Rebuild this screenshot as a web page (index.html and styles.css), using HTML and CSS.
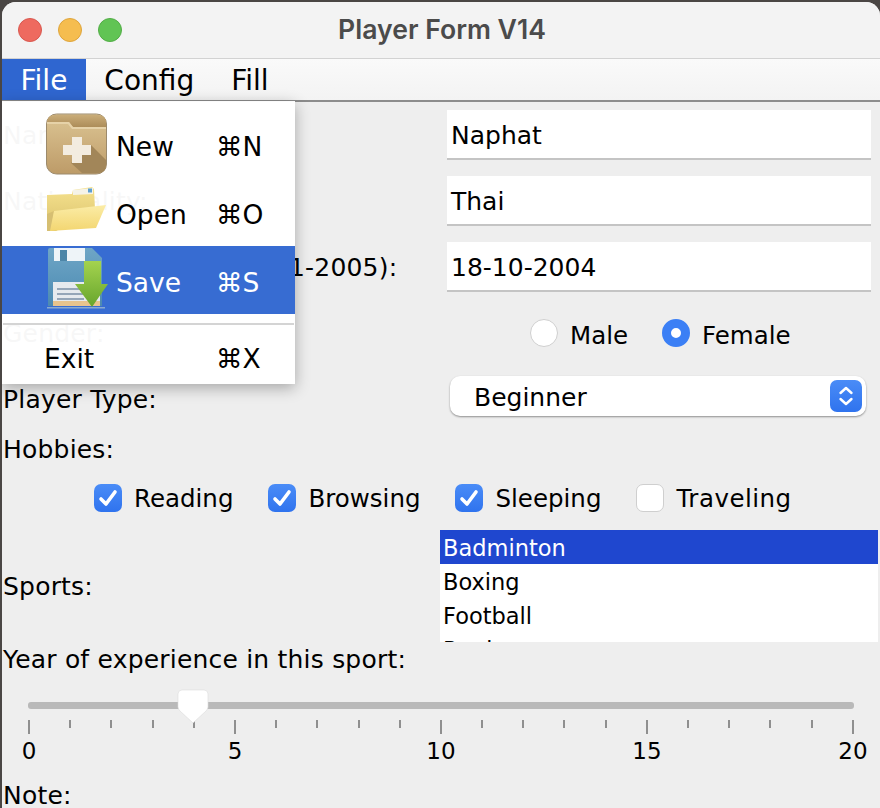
FILE: index.html
```html
<!DOCTYPE html>
<html lang="en">
<head>
  <meta charset="UTF-8" />
  <title>Player Form V14</title>
  <link rel="stylesheet" href="styles.css">
</head>
<body>

  <div class="window">
    <div class="titlebar">
      <div class="lights">
        <span class="light red"></span>
        <span class="light yellow"></span>
        <span class="light green"></span>
      </div>
      <div class="title">Player Form V14</div>
    </div>

    <div class="menubar">
      <span class="menu-item active">File</span>
      <span class="menu-item">Config</span>
      <span class="menu-item">Fill</span>
    </div>

    <div class="form">
      <div class="row row-input">
        <label>Name:</label>
        <div class="text-field">Naphat</div>
      </div>
      <div class="row row-input">
        <label>Nationality:</label>
        <div class="text-field">Thai</div>
      </div>
      <div class="row row-input">
        <label>Date of Birth (eg. 31-01-2005):</label>
        <div class="text-field">18-10-2004</div>
      </div>

      <div class="row row-gender">
        <label>Gender:</label>
        <div class="radios">
          <span class="radio"></span><span class="radio-text male">Male</span>
          <span class="radio on"></span><span class="radio-text">Female</span>
        </div>
      </div>

      <div class="row row-type">
        <label>Player Type:</label>
        <div class="combo">
          <span class="combo-text">Beginner</span>
          <span class="combo-btn">
            <svg width="18" height="26" viewBox="0 0 18 26"><path d="M3.5 10 L9 5 L14.5 10 M3.5 16 L9 21 L14.5 16" fill="none" stroke="#fff" stroke-width="2.4" stroke-linecap="round" stroke-linejoin="round"/></svg>
          </span>
        </div>
      </div>

      <div class="row-hobbies">Hobbies:</div>

      <div class="checks">
        <span class="check on"><svg width="28" height="28" viewBox="0 0 28 28"><path d="M7 15 L12 20 L21 8" fill="none" stroke="#fff" stroke-width="3.6" stroke-linecap="round" stroke-linejoin="round"/></svg></span>
        <span class="check-text">Reading</span>
        <span class="check on"><svg width="28" height="28" viewBox="0 0 28 28"><path d="M7 15 L12 20 L21 8" fill="none" stroke="#fff" stroke-width="3.6" stroke-linecap="round" stroke-linejoin="round"/></svg></span>
        <span class="check-text">Browsing</span>
        <span class="check on"><svg width="28" height="28" viewBox="0 0 28 28"><path d="M7 15 L12 20 L21 8" fill="none" stroke="#fff" stroke-width="3.6" stroke-linecap="round" stroke-linejoin="round"/></svg></span>
        <span class="check-text">Sleeping</span>
        <span class="check"></span>
        <span class="check-text wide">Traveling</span>
      </div>

      <div class="row row-sports">
        <label>Sports:</label>
        <div class="list">
          <div class="list-item selected">Badminton</div>
          <div class="list-item">Boxing</div>
          <div class="list-item">Football</div>
          <div class="list-item">Rugby</div>
        </div>
      </div>

      <div class="row-year">Year of experience in this sport:</div>

      <div class="slider">
        <div class="track">
          <svg class="thumb" width="32" height="35" viewBox="0 0 32 35"><path d="M5 1 H27 Q31 1 31 5 V18 Q31 20 29 22 L16 34 L3 22 Q1 20 1 18 V5 Q1 1 5 1 Z" fill="#fff" stroke="#dcdcdc" stroke-width="0.6"/></svg>
        </div>
        <div class="ticks">
          <i class="major"></i><i></i><i></i><i></i><i></i>
          <i class="major"></i><i></i><i></i><i></i><i></i>
          <i class="major"></i><i></i><i></i><i></i><i></i>
          <i class="major"></i><i></i><i></i><i></i><i></i>
          <i class="major"></i>
        </div>
        <div class="tick-labels">
          <span>0</span><span>5</span><span>10</span><span>15</span><span>20</span>
        </div>
      </div>

      <div class="row-note">Note:</div>
    </div>

    <!-- open File menu, sits over the form -->
    <div class="popup">
      <div class="popup-row">
        <svg class="popup-icon" width="62" height="66" viewBox="0 -2 62 66">
          <defs>
            <linearGradient id="box" x1="0" y1="0" x2="0" y2="1"><stop offset="0" stop-color="#dcc594"/><stop offset="1" stop-color="#bd9b68"/></linearGradient>
            <linearGradient id="fold" x1="0" y1="0" x2="0" y2="1"><stop offset="0" stop-color="#c9ac78"/><stop offset="1" stop-color="#ad8d59"/></linearGradient>
            <linearGradient id="front" x1="0" y1="0" x2="0" y2="1"><stop offset="0" stop-color="#fbeca6"/><stop offset="1" stop-color="#f3d671"/></linearGradient>
            <linearGradient id="back" x1="0" y1="0" x2="0" y2="1"><stop offset="0" stop-color="#f6e28e"/><stop offset="1" stop-color="#d9c16c"/></linearGradient>
            <linearGradient id="disk" x1="0" y1="0" x2="0" y2="1"><stop offset="0" stop-color="#6fa6c6"/><stop offset="1" stop-color="#4c8ab2"/></linearGradient>
            <linearGradient id="arrow" x1="0" y1="0" x2="0" y2="1"><stop offset="0" stop-color="#a4d34f"/><stop offset="1" stop-color="#67a52c"/></linearGradient>
          </defs>
          <rect x="0.5" y="1" width="60" height="60" rx="10" fill="url(#box)" stroke="#9c8a6c" stroke-width="1"/>
          <path d="M1 10 Q1 2 9 2 H52 Q60 2 60 10 V14 H27 L23 9 H1 Z" fill="url(#fold)"/>
          <path d="M1 9 H23 L27 14 H60 V16 H26 L22 11 H1 Z" fill="#e6d2a8"/>
          <path d="M45 32 L60 47 V52 Q60 60 52 60 H36 L25 50 Z" fill="#a28659"/>
          <path d="M26 24 H36 V32 H45 V42 H36 V50 H26 V42 H17 V32 H26 Z" fill="#f3ece0"/>
        </svg>
        <span class="popup-label">New</span>
        <span class="popup-key">⌘N</span>
      </div>
      <div class="popup-row">
        <svg class="popup-icon" width="62" height="66" viewBox="0 -2 62 66">
          <path d="M1 14 L26 13 L27 9 L46 6 L48 8 L49 28 L10 50 L1 50 Z" fill="url(#back)"/>
          <path d="M27 9 L47 7 L47 13 L27 14 Z" fill="#f5f3e8"/>
          <rect x="42" y="7.5" width="4" height="4" fill="#5e9fd0"/>
          <path d="M1 33 L8 30 L5 50 L1 50 Z" fill="#d6bf72"/>
          <path d="M8 30 L60 24 L50 47 L4 50 Z" fill="url(#front)"/>
        </svg>
        <span class="popup-label">Open</span>
        <span class="popup-key">⌘O</span>
      </div>
      <div class="popup-row selected">
        <svg class="popup-icon" width="62" height="66" viewBox="0 -2 62 66">
          <path d="M2 1 Q2 -1 4 -1 H46 L56 9 V57 H2 Z" fill="url(#disk)"/>
          <rect x="8" y="-1" width="31" height="13" fill="#eef4f8"/>
          <rect x="14" y="1" width="7" height="11" fill="#4d86a8"/>
          <rect x="7" y="33" width="47" height="24" fill="#e6eaee"/>
          <path d="M11 40 H38 M11 45 H38 M11 50 H38" stroke="#95a6b8" stroke-width="2"/>
          <rect x="7" y="52" width="47" height="5" fill="#e8c48d"/>
          <rect x="1" y="58" width="58" height="1.5" fill="#8aaad0"/>
          <path d="M38 12 H55 V35 H62 L46 58 L29 35 H38 Z" fill="url(#arrow)"/>
        </svg>
        <span class="popup-label">Save</span>
        <span class="popup-key">⌘S</span>
      </div>
      <div class="popup-sep"></div>
      <div class="popup-row exit">
        <span class="popup-label">Exit</span>
        <span class="popup-key">⌘X</span>
      </div>
    </div>
  </div>

</body>
</html>
```

FILE: styles.css
```css
* {
  box-sizing: border-box;
  margin: 0;
  padding: 0;
}

html, body {
  height: 100%;
  overflow: hidden;
}

body {
  font-family: "DejaVu Sans", sans-serif;
  font-size: 25px;
  letter-spacing: 0.2px;
  background-color: #4a4644;
  color: #000;
}

.window {
  position: relative;
  margin: 2px 0 0 2px;
  height: 806px;
  background-color: #eeeeee;
  border-top-left-radius: 14px;
  border-top-right-radius: 14px;
  overflow: hidden;
}

/* title bar */
.titlebar {
  position: relative;
  height: 57px;
  background-color: #f3f3f3;
  border-bottom: 1px solid #d2d2d2;
  display: flex;
  align-items: center;
  justify-content: center;
}

.lights {
  position: absolute;
  left: 16px;
  top: 16px;
  display: flex;
  gap: 16px;
}

.light {
  width: 24px;
  height: 24px;
  border-radius: 50%;
}

.red { background-color: #ee6a5f; border: 1px solid #d9584f; }
.yellow { background-color: #f5bd4f; border: 1px solid #dfa53c; }
.green { background-color: #61c454; border: 1px solid #52ad46; }

.title {
  font-family: Inter, sans-serif;
  font-size: 26.6px;
  font-weight: 600;
  letter-spacing: 0;
  color: #4b4b4b;
  padding: 0 0 2px 2px;
}

/* menu bar */
.menubar {
  height: 43px;
  display: flex;
  background: linear-gradient(#fafafa, #f3f3f3);
  border-bottom: 2px solid #8c8c8c;
}

.menu-item {
  padding: 3px 18.5px 0;
  line-height: 38px;
  font-size: 28px;
  letter-spacing: 0;
}

.menu-item.active {
  background-color: #2f66d0;
  color: #fff;
}

/* form */
.form {
  padding-top: 8px;
}

.row {
  display: flex;
}

.row label {
  width: 445px;
  flex: none;
  padding-left: 1px;
}

.row-input {
  height: 50px;
  margin-bottom: 16px;
  align-items: center;
}

.text-field {
  width: 424px;
  height: 50px;
  background-color: #fff;
  border-bottom: 2px solid #c4c4c4;
  padding-left: 4px;
  line-height: 52px;
  letter-spacing: 0;
}

.row-gender {
  height: 50px;
  align-items: center;
}

.radios {
  display: flex;
  align-items: center;
  margin-left: 83px;
}

.radio {
  width: 28px;
  height: 28px;
  border-radius: 50%;
  background-color: #fff;
  border: 1px solid #cfcfcf;
  margin-right: 12px;
}

.radio.on {
  border: 9px solid #3b7ff5;
}

.radio-text {
  font-size: 24.5px;
  letter-spacing: 0;
  padding-top: 4px;
}

.radio-text.male {
  margin-right: 34px;
}

.row-type {
  height: 42px;
  margin-top: 16px;
  align-items: flex-end;
}

.row-type label {
  line-height: 38px;
  margin-bottom: -3px;
}

.combo {
  margin-left: 3px;
  width: 416px;
  height: 40px;
  background-color: #fff;
  border-radius: 10px;
  box-shadow: 0 1px 2px rgba(0, 0, 0, 0.4);
  display: flex;
  align-items: center;
  justify-content: space-between;
  padding: 0 4px 0 24px;
}

.combo-text {
  padding-top: 2px;
  letter-spacing: 0;
}

.combo-btn {
  width: 32px;
  height: 32px;
  border-radius: 7px;
  background: linear-gradient(#4a8cf7, #2f73ee);
  display: flex;
  align-items: center;
  justify-content: center;
}

.row-hobbies {
  padding-left: 1px;
  margin-top: 16px;
  line-height: 36px;
}

.checks {
  display: flex;
  align-items: center;
  height: 36px;
  margin-top: 12px;
  padding-left: 92px;
}

.check {
  width: 28px;
  height: 28px;
  border-radius: 7px;
  background-color: #fff;
  border: 1px solid #cfcfcf;
  margin-right: 12px;
  flex: none;
}

.check.on {
  border: 0;
  background: linear-gradient(#4a8cf7, #2f73ee);
}

.check svg {
  display: block;
}

.check-text {
  font-size: 24.5px;
  letter-spacing: 0;
  margin-right: 35px;
}

.check-text.wide {
  letter-spacing: 0.5px;
}

.row-sports {
  margin-top: 14px;
  height: 112px;
  align-items: center;
}

.row-sports label {
  width: 438px;
  padding-top: 1px;
}

.list {
  width: 438px;
  height: 112px;
  background-color: #fff;
  overflow: hidden;
}

.list-item {
  height: 34px;
  line-height: 36px;
  padding-left: 3px;
  font-size: 22.5px;
  letter-spacing: 0;
}

.list-item.selected {
  background-color: #1f47cf;
  color: #fff;
}

.row-year {
  padding-left: 1px;
  margin-top: 1px;
  line-height: 34px;
}

/* slider */
.slider {
  padding: 0 26px;
  margin-top: 25px;
}

.track {
  position: relative;
  height: 7px;
  background-color: #b9b9b9;
  border-radius: 3px;
}

.thumb {
  position: absolute;
  left: 149px;
  top: -13px;
}

.ticks {
  display: flex;
  justify-content: space-between;
  align-items: flex-start;
  margin-top: 11px;
  height: 14px;
}

.ticks i {
  width: 2px;
  height: 8px;
  background-color: #8f8f8f;
}

.ticks i.major {
  height: 14px;
}

.tick-labels {
  display: flex;
  justify-content: space-between;
  margin-top: 3px;
  font-size: 23px;
  letter-spacing: 0;
  line-height: 28px;
}

.tick-labels span {
  width: 2px;
  display: flex;
  justify-content: center;
}

.row-note {
  padding-left: 1px;
  margin-top: 13px;
  line-height: 36px;
}

/* File menu */
.popup {
  position: absolute;
  left: 0;
  top: 99px;
  width: 293px;
  height: 283px;
  padding-top: 9px;
  font-size: 26.5px;
  letter-spacing: 0;
  background-color: rgba(255, 255, 255, 0.97);
  box-shadow: 0 4px 14px rgba(0, 0, 0, 0.3);
}

.popup-row {
  position: relative;
  height: 68px;
  display: flex;
  align-items: center;
  padding-top: 4px;
}

.popup-row.selected {
  background-color: rgba(47, 102, 208, 0.96);
  color: #fff;
}

.popup-icon {
  position: absolute;
  left: 44px;
  top: 1px;
}

.popup-label {
  margin-left: 114px;
  width: 100px;
}

.exit .popup-label {
  margin-left: 42px;
  width: 172px;
}

.exit {
  height: 58px;
  padding-top: 8px;
}

.popup-sep {
  height: 2px;
  margin: 9px 1px 0;
  background-color: #d4d4d4;
}
```
